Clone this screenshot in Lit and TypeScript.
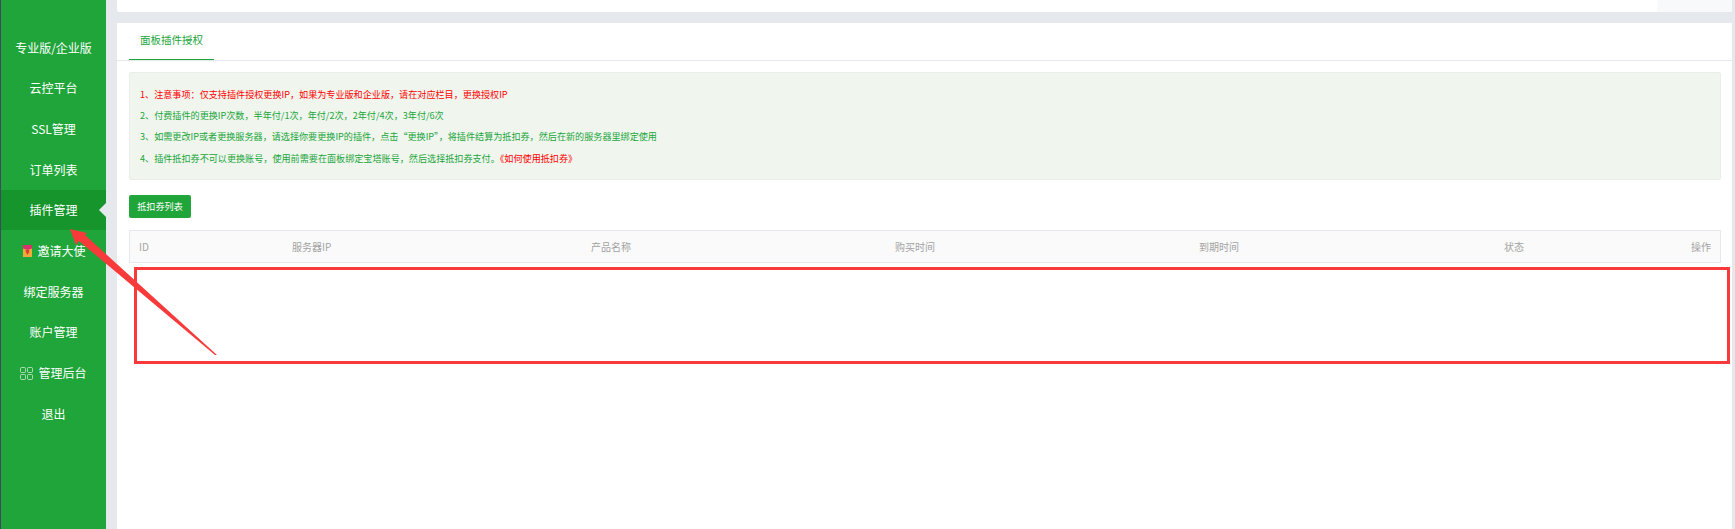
import { LitElement, html, css, svg } from "lit";
import { customElement } from "lit/decorators.js";

const menu = ["专业版/企业版", "云控平台", "SSL管理", "订单列表", "插件管理", "邀请大使", "绑定服务器", "账户管理", "管理后台", "退出"];
const C = "\uFF0C";
const K = "\uFF1A";
const U = "\u3001";

@customElement("app-root")
export class AppRoot extends LitElement {
  static styles = css`
    :host { display: block; width: 1735px; height: 529px; overflow: hidden; position: relative; background: #e5e8ed;
      font-family: "Noto Sans CJK SC", "Liberation Sans", sans-serif; }
    .layout { display: flex; height: 529px; }
    .side { width: 105px; border-left: 1px solid #3c4a5e; background: #20a53a; padding-top: 27px; box-sizing: content-box; flex: none; }
    .item { height: 40.7px; display: flex; align-items: center; justify-content: center; gap: 5px; color: #fff; font-size: 12px; line-height: 1; padding-top: 0.6px; box-sizing: border-box; position: relative; }
    .item.on { background: #15952c; }
    .item.on::after { content: ""; position: absolute; right: 0; top: 50%; margin-top: -7px; border: 7px solid transparent; border-right-color: #e5e8ed; border-left-width: 0; }
    .item svg { display: block; }
    .main { flex: 1; margin-left: 11px; margin-right: 3px; display: flex; flex-direction: column; min-width: 0; }
    .top { height: 12px; background: #fff; border-radius: 0 0 2px 2px; display: flex; justify-content: flex-end; flex: none; }
    .top i { width: 75px; background: #f8f9fb; }
    .card { flex: 1; margin-top: 11px; background: #fff; }
    .tabs { height: 37px; border-bottom: 1px solid #e5e8ed; padding-left: 12px; box-sizing: content-box; }
    .tab { display: inline-flex; width: 85px; height: 37px; box-sizing: border-box; padding-bottom: 3px; align-items: center; justify-content: center; border-bottom: 1px solid #20a53a; color: #20a53a; font-size: 10.5px; }
    .body { padding: 11px 11px 0 12px; }
    .notice { height: 108px; box-sizing: border-box; background: #f0f5ee; border: 1px solid #e9eeea; border-radius: 2px; padding: 11px 10px; color: #20a53a; font-size: 9.1px; }
    .notice p { margin: 0; height: 21.2px; line-height: 21.2px; white-space: nowrap; }
    .red { color: #ff0000; }
    .btn { margin-top: 15px; width: 62px; height: 23px; padding-bottom: 1px; box-sizing: border-box; background: #20a53a; color: #fff; font-size: 9.1px; border-radius: 2px; display: flex; align-items: center; justify-content: center; }
    .thead { margin-top: 12px; height: 33px; box-sizing: border-box; background: #fafafa; border: 1px solid #e5e8ed; display: grid;
      grid-template-columns: 153px 299px 304px 304px 305px 1fr auto; padding: 0 9px; align-items: center; color: #a3a3a3; font-size: 10px; }
    .mark { position: absolute; left: 0; top: 0; pointer-events: none; }
  `;

  render() {
    return html`
      <div class="layout">
        <nav class="side">
          ${menu.map((m, i) => html`<div class="item ${i === 4 ? "on" : ""}">${i === 5 ? this.gift() : ""}${i === 8 ? this.grid() : ""}<span>${m}</span></div>`)}
        </nav>
        <div class="main">
          <div class="top"><i></i></div>
          <div class="card">
            <div class="tabs"><span class="tab">面板插件授权</span></div>
            <div class="body">
              <div class="notice">
                <p class="red">1${U}注意事项${K}仅支持插件授权更换IP${C}如果为专业版和企业版${C}请在对应栏目${C}更换授权IP</p>
                <p>2${U}付费插件的更换IP次数${C}半年付/1次${C}年付/2次${C}2年付/4次${C}3年付/6次</p>
                <p>3${U}如需更改IP或者更换服务器${C}请选择你要更换IP的插件${C}点击“更换IP”${C}将插件结算为抵扣券${C}然后在新的服务器里绑定使用</p>
                <p>4${U}插件抵扣券不可以更换账号${C}使用前需要在面板绑定宝塔账号${C}然后选择抵扣券支付。<span class="red">《如何使用抵扣券》</span></p>
              </div>
              <div class="btn">抵扣券列表</div>
              <div class="thead"><span>ID</span><span>服务器IP</span><span>产品名称</span><span>购买时间</span><span>到期时间</span><span>状态</span><span>操作</span></div>
            </div>
          </div>
        </div>
      </div>
      <svg class="mark" width="1735" height="529" viewBox="0 0 1735 529">
        <rect x="135.5" y="268.5" width="1593" height="94" fill="none" stroke="#f93a3a" stroke-width="3"></rect>
        <polygon points="70,229 87,233 85,235 217,355 215,355 79,241 76,245" fill="#f93a3a"></polygon>
      </svg>
    `;
  }

  gift() {
    return svg`<svg width="11" height="12" viewBox="-2 0 11 12"><rect x="0" y="0" width="9" height="12" fill="#f2a93b"></rect><path d="M0 0h9v3.5L4.5 5 0 3.5z" fill="#d9316b"></path><path d="M2.8 5h3.4v2L4.5 10 2.8 7z" fill="#d8432e"></path></svg>`;
  }

  grid() {
    return svg`<svg width="13" height="13" viewBox="0 0 13 13" fill="none" stroke="#fff" stroke-opacity="0.6" stroke-width="1"><rect x="0.5" y="0.5" width="5" height="5" rx="1"></rect><rect x="7.5" y="0.5" width="5" height="5" rx="1"></rect><rect x="0.5" y="7.5" width="5" height="5" rx="1"></rect><rect x="7.5" y="7.5" width="5" height="5" rx="1"></rect></svg>`;
  }
}
